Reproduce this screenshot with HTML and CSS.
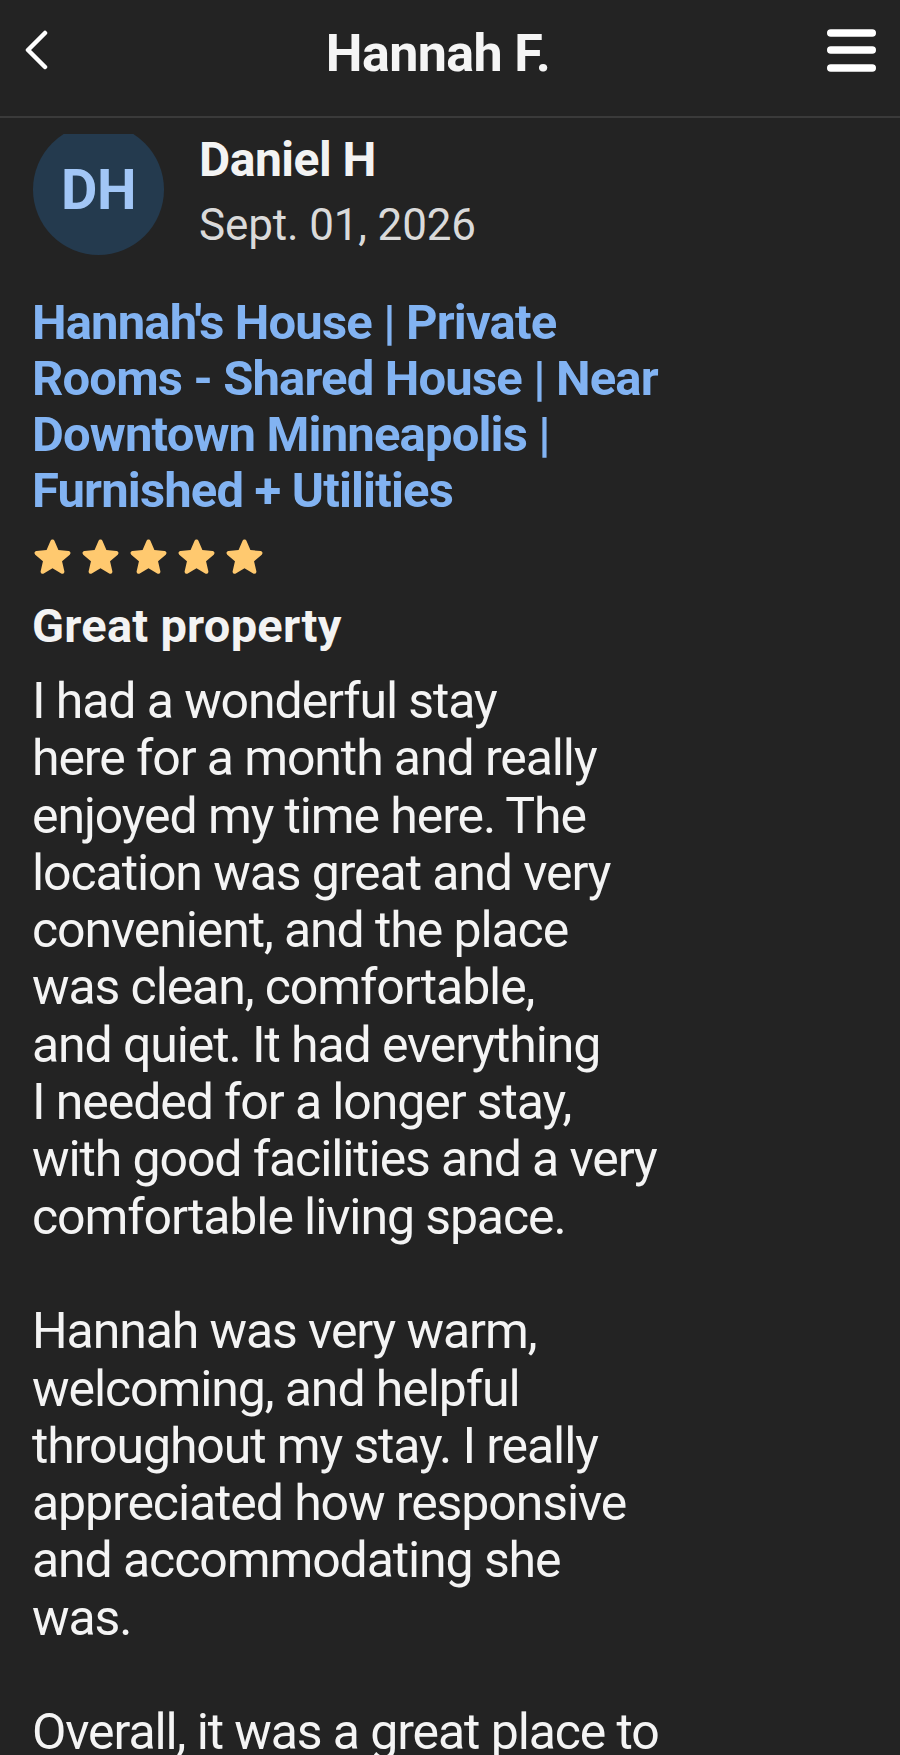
FILE: index.html
```html
<!DOCTYPE html>
<html lang="en">
<head>
<meta charset="utf-8">
<title>Hannah F.</title>
<link rel="stylesheet" href="styles.css">
</head>
<body>
<div class="screen">
  <header class="topbar">
    <div class="topbar-left">
      <svg class="icon-back" width="28" height="40" viewBox="0 0 28 40" aria-hidden="true">
        <polyline points="21,3 4,20 21,37" fill="none" stroke="#ffffff" stroke-width="4.5" stroke-linecap="round" stroke-linejoin="round"/>
      </svg>
    </div>
    <h1 class="topbar-title">Hannah F.</h1>
    <div class="topbar-right">
      <svg class="icon-menu" width="56" height="44" viewBox="0 0 56 44" aria-hidden="true">
        <g stroke="#ffffff" stroke-width="7.5" stroke-linecap="round">
          <line x1="6.75" y1="5" x2="48.25" y2="5"/>
          <line x1="6.75" y1="22" x2="48.25" y2="22"/>
          <line x1="6.75" y1="40" x2="48.25" y2="40"/>
        </g>
      </svg>
    </div>
  </header>
  <main class="content">
    <article class="review">
      <div class="review-head">
        <div class="avatar">DH</div>
        <div class="meta">
          <div class="reviewer">Daniel H</div>
          <div class="date">Sept. 01, 2026</div>
        </div>
      </div>
      <a class="listing" href="#">Hannah's House | Private<br>Rooms - Shared House | Near<br>Downtown Minneapolis |<br>Furnished + Utilities</a>
      <div class="stars" aria-label="5 stars">
        <svg class="star" viewBox="3.4 2.4 17.2 17.6"><path d="M12 17.27l4.15 2.51c.76.46 1.69-.22 1.49-1.08l-1.1-4.72 3.67-3.18c.67-.58.31-1.68-.57-1.75l-4.83-.41-1.89-4.46c-.34-.81-1.5-.81-1.84 0L9.19 8.63l-4.83.41c-.88.07-1.24 1.17-.57 1.75l3.67 3.18-1.1 4.72c-.2.86.73 1.54 1.49 1.08l4.15-2.5z"/></svg>
        <svg class="star" viewBox="3.4 2.4 17.2 17.6"><path d="M12 17.27l4.15 2.51c.76.46 1.69-.22 1.49-1.08l-1.1-4.72 3.67-3.18c.67-.58.31-1.68-.57-1.75l-4.83-.41-1.89-4.46c-.34-.81-1.5-.81-1.84 0L9.19 8.63l-4.83.41c-.88.07-1.24 1.17-.57 1.75l3.67 3.18-1.1 4.72c-.2.86.73 1.54 1.49 1.08l4.15-2.5z"/></svg>
        <svg class="star" viewBox="3.4 2.4 17.2 17.6"><path d="M12 17.27l4.15 2.51c.76.46 1.69-.22 1.49-1.08l-1.1-4.72 3.67-3.18c.67-.58.31-1.68-.57-1.75l-4.83-.41-1.89-4.46c-.34-.81-1.5-.81-1.84 0L9.19 8.63l-4.83.41c-.88.07-1.24 1.17-.57 1.75l3.67 3.18-1.1 4.72c-.2.86.73 1.54 1.49 1.08l4.15-2.5z"/></svg>
        <svg class="star" viewBox="3.4 2.4 17.2 17.6"><path d="M12 17.27l4.15 2.51c.76.46 1.69-.22 1.49-1.08l-1.1-4.72 3.67-3.18c.67-.58.31-1.68-.57-1.75l-4.83-.41-1.89-4.46c-.34-.81-1.5-.81-1.84 0L9.19 8.63l-4.83.41c-.88.07-1.24 1.17-.57 1.75l3.67 3.18-1.1 4.72c-.2.86.73 1.54 1.49 1.08l4.15-2.5z"/></svg>
        <svg class="star" viewBox="3.4 2.4 17.2 17.6"><path d="M12 17.27l4.15 2.51c.76.46 1.69-.22 1.49-1.08l-1.1-4.72 3.67-3.18c.67-.58.31-1.68-.57-1.75l-4.83-.41-1.89-4.46c-.34-.81-1.5-.81-1.84 0L9.19 8.63l-4.83.41c-.88.07-1.24 1.17-.57 1.75l3.67 3.18-1.1 4.72c-.2.86.73 1.54 1.49 1.08l4.15-2.5z"/></svg>
      </div>
      <h2 class="review-title">Great property</h2>
      <p class="review-body">I had a wonderful stay<br>here for a month and really<br>enjoyed my time here. The<br>location was great and very<br>convenient, and the place<br>was clean, comfortable,<br>and quiet. It had everything<br>I needed for a longer stay,<br>with good facilities and a very<br>comfortable living space.<br><br>Hannah was very warm,<br>welcoming, and helpful<br>throughout my stay. I really<br>appreciated how responsive<br>and accommodating she<br>was.<br><br>Overall, it was a great place to<br>stay and I would definitely<br>recommend it.</p>
    </article>
  </main>
</div>
</body>
</html>
```
FILE: styles.css
```css
html, body {
  margin: 0;
  padding: 0;
  background: #232323;
}

body {
  font-family: Roboto, "Noto Sans", "Liberation Sans", sans-serif;
  color: #f2f2f2;
}

.screen {
  width: 900px;
  height: 1755px;
  overflow: hidden;
  display: flex;
  flex-direction: column;
}

.topbar {
  flex: none;
  height: 116px;
  display: flex;
  align-items: flex-start;
  border-bottom: 2px solid #3a3a3a;
}

.topbar-left {
  width: 76px;
  height: 100px;
  display: flex;
  align-items: center;
  padding-left: 24px;
  box-sizing: border-box;
}

.topbar-right {
  width: 100px;
  height: 100px;
  display: flex;
  align-items: center;
  justify-content: flex-end;
  padding-right: 20px;
  box-sizing: border-box;
}

.icon-back, .icon-menu {
  display: block;
}

.topbar-title {
  flex: 1;
  margin: 0;
  padding-top: 4px;
  height: 100px;
  line-height: 100px;
  box-sizing: border-box;
  text-align: center;
  font-size: 52px;
  font-weight: 700;
  letter-spacing: -0.6px;
  color: #f5f5f5;
}

.content {
  flex: 1;
  margin-top: 16px;
  overflow: hidden;
  padding: 0 32px;
}

.review {
  margin-top: -10px;
}

.review-head {
  display: flex;
  align-items: flex-start;
  gap: 35px;
}

.avatar {
  flex: none;
  width: 131px;
  height: 131px;
  margin-left: 1px;
  border-radius: 50%;
  background: #243a4e;
  color: #a2c6f6;
  display: flex;
  align-items: center;
  justify-content: center;
  font-size: 56px;
  font-weight: 700;
  letter-spacing: -0.5px;
}

.meta {
  display: flex;
  flex-direction: column;
  margin-top: 11px;
}

.reviewer {
  font-size: 48px;
  line-height: 50px;
  font-weight: 700;
  letter-spacing: -0.5px;
  color: #f3f3f3;
}

.date {
  margin-top: 15px;
  font-size: 44px;
  line-height: 50px;
  letter-spacing: -0.15px;
  color: #dadada;
}

.listing {
  display: block;
  margin-top: 40px;
  font-size: 49px;
  line-height: 56px;
  font-weight: 700;
  letter-spacing: -0.85px;
  color: #82b3f2;
  text-decoration: none;
}

.stars {
  display: flex;
  gap: 11px;
  margin-top: 18px;
  margin-left: 2px;
  height: 37px;
  align-items: center;
}

.star {
  width: 37px;
  height: 37px;
  fill: #ffc96f;
  display: block;
}

.review-title {
  margin: 24px 0 0;
  font-size: 47px;
  line-height: 56px;
  font-weight: 700;
  letter-spacing: 0.25px;
  color: #f3f3f3;
}

.review-body {
  margin: 19px 0 0;
  font-size: 50px;
  line-height: 57.3px;
  font-weight: 400;
  letter-spacing: -1.1px;
  color: #f4f4f4;
}
```
